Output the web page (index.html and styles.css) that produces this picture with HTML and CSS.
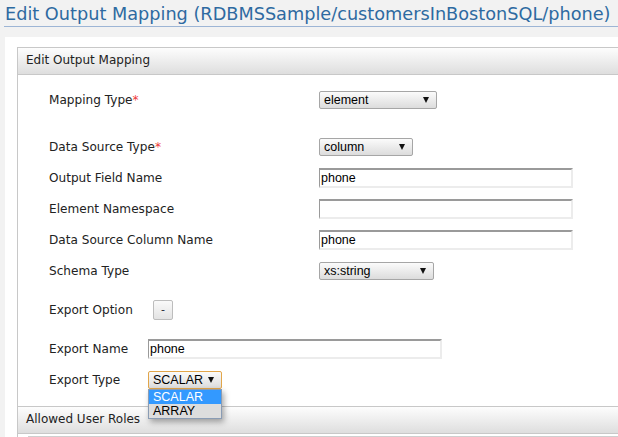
FILE: index.html
```html
<!DOCTYPE html>
<html>
<head>
<meta charset="utf-8">
<link rel="stylesheet" href="styles.css">
</head>
<body>
<h1 class="title">Edit Output Mapping (RDBMSSample/customersInBostonSQL/phone)</h1>
<div class="panel">
  <div class="box">
    <div class="box-head">Edit Output Mapping</div>
    <div class="content">
      <div class="row">
        <div class="label">Mapping Type<span class="req">*</span></div>
        <div class="select w-element"><span class="sel-text">element</span><span class="arrow"></span></div>
      </div>
      <div class="spacer"></div>
      <div class="row">
        <div class="label">Data Source Type<span class="req">*</span></div>
        <div class="select w-column"><span class="sel-text">column</span><span class="arrow"></span></div>
      </div>
      <div class="row">
        <div class="label">Output Field Name</div>
        <input class="text w-main" type="text" value="phone">
      </div>
      <div class="row">
        <div class="label">Element Namespace</div>
        <input class="text w-main" type="text" value="">
      </div>
      <div class="row">
        <div class="label">Data Source Column Name</div>
        <input class="text w-main" type="text" value="phone">
      </div>
      <div class="row">
        <div class="label">Schema Type</div>
        <div class="select w-schema"><span class="sel-text">xs:string</span><span class="arrow"></span></div>
      </div>
      <div class="row export-opt">
        <div class="label label-opt">Export Option</div>
        <div class="btn">-</div>
      </div>
      <div class="row export-name">
        <div class="label label-exp">Export Name</div>
        <input class="text w-export" type="text" value="phone">
      </div>
      <div class="row">
        <div class="label label-exp">Export Type</div>
        <div class="select-wrap">
          <div class="select focused w-type"><span class="sel-text">SCALAR</span><span class="arrow"></span></div>
          <div class="dropdown">
            <div class="option selected">SCALAR</div>
            <div class="option">ARRAY</div>
          </div>
        </div>
      </div>
    </div>
    <div class="box-head second">Allowed User Roles</div>
    <div class="sub"></div>
  </div>
</div>
</body>
</html>
```
FILE: styles.css
```css
html, body {
  margin: 0;
  padding: 0;
  background: #f2f2f2;
  overflow: hidden;
}

.title {
  margin: 0 0 0 4px;
  padding: 3px 0 1px 1px;
  font-family: "DejaVu Sans", sans-serif;
  font-weight: normal;
  font-size: 17.7px;
  line-height: 22px;
  color: #2e6aa1;
  border-bottom: 1px solid #9db5d5;
  white-space: nowrap;
}

.panel {
  margin: 10px -20px 0 5px;
  padding: 10px 0 0 12px;
  background: #fff;
  height: 400px;
}

.box {
  border: 1px solid #c8c8c8;
  border-right: none;
}

.box-head {
  height: 26px;
  line-height: 25px;
  padding-left: 8px;
  background: linear-gradient(#fdfdfd, #dedede);
  border-bottom: 1px solid #c8c8c8;
  font-family: "DejaVu Sans", sans-serif;
  font-size: 12px;
  color: #222;
}

.box-head.second {
  border-top: 1px solid #c8c8c8;
}

.sub {
  margin: 2px 0 0 10px;
  border-top: 1px solid #cfcfcf;
  height: 10px;
}

.content {
  padding: 9px 0 11px 31px;
}

.row {
  display: flex;
  align-items: center;
  height: 31px;
}

.spacer {
  height: 16px;
}

.export-opt {
  margin-top: 8px;
}

.export-name {
  margin-top: 8px;
}

.label {
  width: 270px;
  flex: none;
  font-family: "DejaVu Sans", sans-serif;
  font-size: 12.1px;
  color: #222;
}

.label-opt {
  width: 104px;
}

.label-exp {
  width: 99px;
}

.req {
  color: #ee3a3a;
}

.select {
  box-sizing: border-box;
  height: 18px;
  display: flex;
  align-items: center;
  justify-content: space-between;
  padding: 0 7px 0 4px;
  border: 1px solid #a6a6a6;
  border-radius: 2px;
  background: linear-gradient(#fbfbfb, #dcdcdc);
  font-family: "Liberation Sans", Arial, sans-serif;
  font-size: 12.5px;
  color: #000;
}

.select.focused {
  border-color: #e2a64a;
}

.sel-text {
  line-height: 16px;
}

.arrow {
  width: 0;
  height: 0;
  border-left: 3px solid transparent;
  border-right: 3px solid transparent;
  border-top: 6px solid #111;
}

.w-element { width: 118px; }
.w-column { width: 94px; }
.w-schema { width: 115px; }
.w-type { width: 74px; }

.text {
  box-sizing: border-box;
  height: 20px;
  margin: 0;
  padding: 0 1px;
  border-style: solid;
  border-width: 2px 2px 2px 1px;
  border-color: #9a9a9a #ececec #ececec #9a9a9a;
  background: #fff;
  font-family: "Liberation Sans", Arial, sans-serif;
  font-size: 12.5px;
  color: #000;
  outline: none;
}

.w-main { width: 254px; }
.w-export { width: 294px; }

.btn {
  box-sizing: border-box;
  width: 20px;
  height: 20px;
  border: 1px solid #bdbdbd;
  border-radius: 2px;
  background: linear-gradient(#fafafa, #e3e3e3);
  font-family: "DejaVu Sans", sans-serif;
  font-size: 11px;
  line-height: 17px;
  text-align: center;
  color: #223;
}

.select-wrap {
  position: relative;
}

.dropdown {
  position: absolute;
  left: 0;
  top: 18px;
  width: 74px;
  box-sizing: border-box;
  border: 1px solid #8a9cb4;
  background: #dddddd;
  box-shadow: 2px 3px 6px rgba(0, 0, 0, 0.35);
  z-index: 2;
}

.option {
  height: 14px;
  line-height: 14px;
  padding-left: 4px;
  font-family: "Liberation Sans", Arial, sans-serif;
  font-size: 12.5px;
  color: #000;
}

.option.selected {
  background: #3399ff;
  color: #fff;
}
```
